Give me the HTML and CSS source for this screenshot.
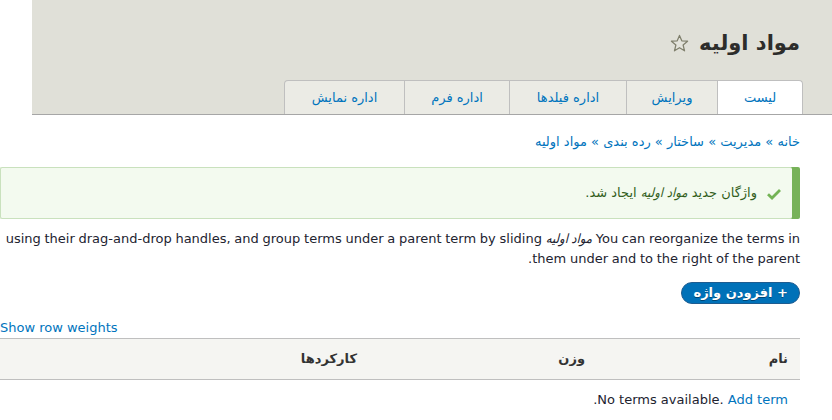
FILE: index.html
```html
<!DOCTYPE html>
<html dir="rtl" lang="fa">
<head>
<meta charset="utf-8">
<title>مواد اولیه</title>
<link rel="stylesheet" href="styles.css">
</head>
<body>
<header class="header">
  <div class="title-row">
    <h1 class="page-title">مواد اولیه</h1>
    <svg class="star" width="19" height="19" viewBox="0 0 20 20"><polygon points="10,1.5 12.4,7.2 18.5,7.6 13.8,11.6 15.3,17.7 10,14.4 4.7,17.7 6.2,11.6 1.5,7.6 7.6,7.2" fill="#e3e3db" stroke="#7f7f6c" stroke-width="1.3" stroke-linejoin="round"/></svg>
  </div>
  <ul class="tabs">
    <li class="tab tab-first tab-list active"><a href="#">لیست</a></li>
    <li class="tab tab-edit"><a href="#">ویرایش</a></li>
    <li class="tab tab-fields"><a href="#">اداره فیلدها</a></li>
    <li class="tab tab-form"><a href="#">اداره فرم</a></li>
    <li class="tab tab-last tab-display"><a href="#">اداره نمایش</a></li>
  </ul>
</header>
<main class="content">
  <nav class="breadcrumb"><a href="#">خانه</a> » <a href="#">مدیریت</a> » <a href="#">ساختار</a> » <a href="#">رده بندی</a> » <a href="#">مواد اولیه</a></nav>
  <div class="messages">
    <svg class="check" width="16" height="16" viewBox="0 0 16 16"><path d="M2 8.3 L6 12 L14 4" fill="none" stroke="#73b355" stroke-width="2.8"/></svg>
    <span>واژگان جدید <em>مواد اولیه</em> ایجاد شد.</span>
  </div>
  <p class="help">You can reorganize the terms in <em>مواد اولیه</em> using their drag-and-drop handles, and group terms under a parent term by sliding them under and to the right of the parent.</p>
  <ul class="action-links"><li><a class="button" href="#">+ افزودن واژه</a></li></ul>
  <div class="weights"><a href="#">Show row weights</a></div>
  <table class="terms">
    <thead>
      <tr><th class="col-name">نام</th><th class="col-weight">وزن</th><th class="col-ops">کارکردها</th></tr>
    </thead>
    <tbody>
      <tr><td colspan="3">No terms available. <a href="#">Add term</a>.</td></tr>
    </tbody>
  </table>
</main>
</body>
</html>
```
FILE: styles.css
```css
html, body {
  margin: 0;
  padding: 0;
  background: #fff;
}
body {
  font-family: "DejaVu Sans", sans-serif;
  font-size: 13px;
  line-height: 20px;
  color: #222330;
  overflow: hidden;
}
a {
  color: #0074bd;
  text-decoration: none;
}
em {
  font-family: "DejaVu Sans Condensed", "DejaVu Sans", sans-serif;
}
.header {
  margin-left: 32px;
  background: #e0e0d8;
  border-bottom: 1px solid #a6a6a6;
  height: 114px;
  display: flex;
  flex-direction: column;
  justify-content: flex-end;
}
.title-row {
  display: flex;
  align-items: center;
  gap: 10px;
  padding-right: 32px;
  margin-bottom: 22px;
}
.page-title {
  margin: 0;
  font-size: 21px;
  line-height: 30px;
  font-weight: bold;
  color: #2d2d2b;
}
.star {
  display: block;
}
.tabs {
  list-style: none;
  margin: 0 29px 0 0;
  padding: 0;
  display: flex;
}
.tab a {
  display: block;
  box-sizing: border-box;
  height: 34px;
  line-height: 33px;
  text-align: center;
  background: #ebebe5;
  border: 1px solid #bfbfbf;
  border-bottom: 0;
  border-left: 0;
  color: #0074bd;
}
.tab-list a { width: 85px; }
.tab-edit a { width: 91px; }
.tab-fields a { width: 117px; }
.tab-form a { width: 105px; }
.tab-display a { width: 121px; }
.tab-last a {
  border-left: 1px solid #bfbfbf;
  border-top-left-radius: 4px;
}
.tab-first a {
  border-top-right-radius: 4px;
}
.tab.active a {
  background: #fff;
}
.content {
  padding: 0 32px 0 0;
}
.breadcrumb {
  padding-top: 17px;
  margin-bottom: 15px;
  color: #0074bd;
}
.messages {
  position: relative;
  margin: 0 8px 0 0;
  padding: 15px 35px 15px 20px;
  background: #f3faef;
  border: 1px solid #c9e1bd;
  border-right: 0;
  border-radius: 2px;
  box-shadow: 8px 0 0 #77b259;
  color: #325e1c;
}
.check {
  position: absolute;
  right: 10px;
  top: 18px;
}
.help {
  margin: 10px 0 13px;
  word-spacing: -0.4px;
}
.action-links {
  list-style: none;
  margin: 0;
  padding: 0;
  display: flex;
}
.button {
  display: inline-block;
  padding: 0 11px;
  height: 20px;
  line-height: 20px;
  border: 1px solid #1e5c90;
  border-radius: 20em;
  background: #0071b8;
  color: #fff;
  font-weight: bold;
  font-size: 13px;
  text-shadow: 0 1px rgba(0,0,0,0.4);
}
.weights {
  direction: ltr;
  text-align: left;
  margin-top: 14px;
}
.terms {
  width: 100%;
  border-collapse: collapse;
  table-layout: fixed;
}
.terms th {
  background: #f5f5f2;
  border-top: 1px solid #bfbfbf;
  border-bottom: 1px solid #bfbfbf;
  padding: 10px 12px;
  text-align: right;
  font-weight: bold;
  color: #333;
}
.col-name { width: 179px; }
.col-weight { width: 204px; }
.terms td {
  padding: 10px 12px;
  border-bottom: 1px solid #e6e4df;
}
```
